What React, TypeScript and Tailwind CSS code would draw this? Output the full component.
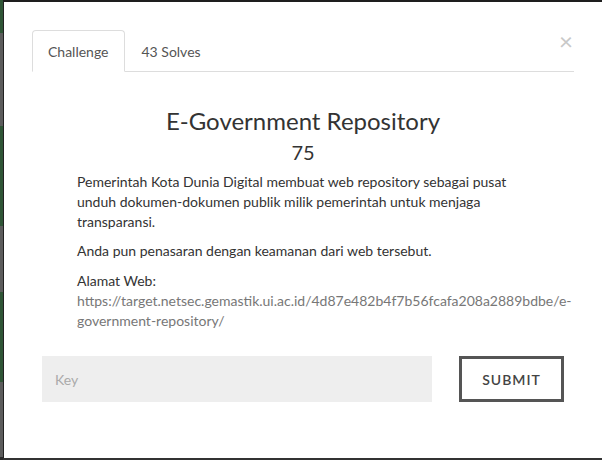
import React from "react";

export default function App() {
  const font = { fontFamily: "Lato, 'Open Sans', sans-serif" };
  return (
    <div className="w-[602px] h-[460px] bg-[#222] flex overflow-hidden" style={font}>
      <div className="w-[3px] flex flex-col shrink-0">
        <div className="h-[33px] bg-[#2f5536]" />
        <div className="h-[93px] bg-[#5c5c5c]" />
        <div className="h-[100px] bg-[#2f5536]" />
        <div className="h-[66px] bg-[#5c5c5c]" />
        <div className="h-[90px] bg-[#2f5536]" />
        <div className="h-[75px] bg-[#5c5c5c]" />
        <div className="flex-1 bg-[#2a2a2a]" />
      </div>
      <div className="w-[599px] min-w-0 shrink-0 flex flex-col">
        <div className="h-[2px] bg-[#1e1e1e]" />
        <div className="h-[456px] w-[599px] bg-white border-l border-[#222] pt-[28px] pl-[28px] pr-[28px] overflow-hidden">
          <div className="relative flex border-b border-[#ddd] h-[42px] w-[542px]">
            <div className="h-[42px] px-[15px] flex items-center border border-[#ddd] border-b-white rounded-t-[4px] bg-white text-[14px] text-[#555] -mb-px">
              Challenge
            </div>
            <div className="h-[42px] px-[17px] flex items-center text-[14px] text-[#555]">
              43 Solves
            </div>
            <div className="absolute right-[1px] top-[-1px] text-[24px] leading-none text-[#c8c8c8]">
              ×
            </div>
          </div>
          <div className="w-[542px]">
            <h1 className="mt-[34px] text-center text-[24px] leading-[29px] text-[#333]">
              E-Government Repository
            </h1>
            <div className="mt-[5px] text-center text-[20px] leading-[24px] text-[#333]">75</div>
            <div className="mt-[8px] mx-[45px] w-[452px] text-[14px] leading-[20px] text-[#333]">
              <p className="mb-[9px]">
                Pemerintah Kota Dunia Digital membuat web repository sebagai pusat unduh dokumen-dokumen publik milik pemerintah untuk menjaga transparansi.
              </p>
              <p className="mb-[10px]">Anda pun penasaran dengan keamanan dari web tersebut.</p>
              <p>
                Alamat Web:
                <br />
                <span className="text-[#777]">
                  https://target.netsec.gemastik.ui.ac.id/4d87e482b4f7b56fcafa208a2889bdbe/e-government-repository/
                </span>
              </p>
            </div>
            <div className="mt-[25px] px-[10px] flex gap-[27px]">
              <div className="flex-1 h-[46px] bg-[#eee] flex items-center pl-[13px] text-[14px] text-[#aaa]">
                Key
              </div>
              <div className="w-[105px] h-[46px] border-[3px] border-[#555] flex items-center justify-center text-[14px] tracking-[1px] text-[#444] font-semibold">
                SUBMIT
              </div>
            </div>
          </div>
        </div>
        <div className="flex-1 bg-[#333]" />
      </div>
    </div>
  );
}
